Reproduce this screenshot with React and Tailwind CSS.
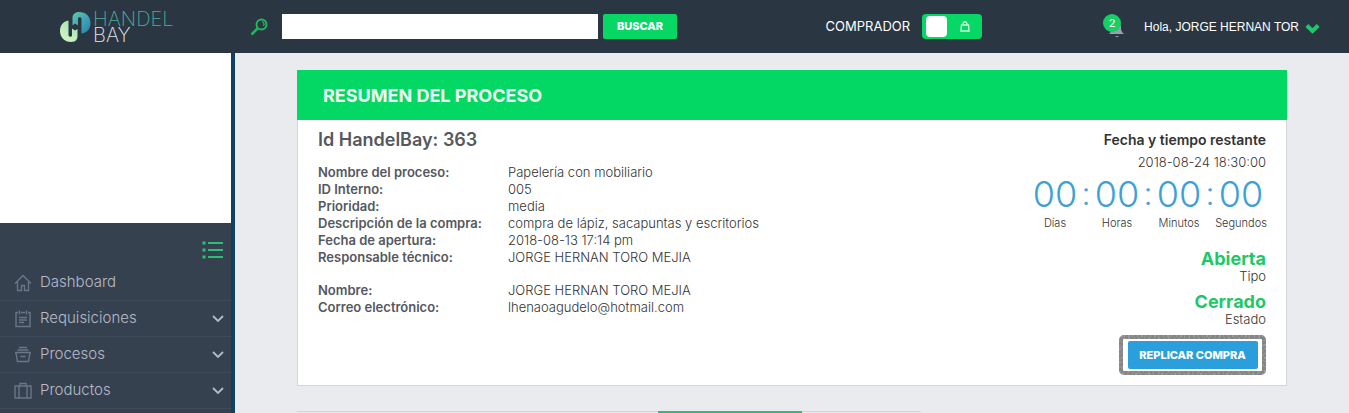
const details = [
    ["Nombre del proceso:", "Papelería con mobiliario"],
    ["ID Interno:", "005"],
    ["Prioridad:", "media"],
    ["Descripción de la compra:", "compra de lápiz, sacapuntas y escritorios"],
    ["Fecha de apertura:", "2018-08-13 17:14 pm"],
    ["Responsable técnico:", "JORGE HERNAN TORO MEJIA"],
];

const contact = [
    ["Nombre:", "JORGE HERNAN TORO MEJIA"],
    ["Correo electrónico:", "lhenaoagudelo@hotmail.com"],
];

const countdown = ["Días", "Horas", "Minutos", "Segundos"];

const menu = [
    { label: "Dashboard", icon: HomeIcon },
    { label: "Requisiciones", icon: NotesIcon, nested: true },
    { label: "Procesos", icon: BasketIcon, nested: true },
    { label: "Productos", icon: CaseIcon, nested: true },
];

function HomeIcon() {
    return (
        <svg viewBox="0 0 18 18" className="size-[18px]" fill="none" stroke="currentColor" strokeWidth="1.4">
            <path d="M1 9.5 9 1.5l8 8M3.500 8v8.500h4v-5h3v5h4V8" />
        </svg>
    );
}

function NotesIcon() {
    return (
        <svg viewBox="0 0 18 18" className="size-[18px]" fill="none" stroke="currentColor" strokeWidth="1.4">
            <path d="M4 2.500H2v14h14v-14h-2M7 2.500h4M5.500 0.500v4M12.500 0.500v4M5 7.500h8M5 10h8M5 12.500h5" />
        </svg>
    );
}

function BasketIcon() {
    return (
        <svg viewBox="0 0 18 18" className="size-[18px]" fill="none" stroke="currentColor" strokeWidth="1.4">
            <path d="M5 1.500h8M3.500 4h11M1 6.500h16M2 7l1.500 8.500h11L16 7M6.500 10.500h5" />
        </svg>
    );
}

function CaseIcon() {
    return (
        <svg viewBox="0 0 18 18" className="size-[18px]" fill="none" stroke="currentColor" strokeWidth="1.4">
            <path d="M1 4h16v12H1zM6 4V1.500h6V4M5 4v12M13 4v12" />
        </svg>
    );
}

function Chevron() {
    return (
        <svg viewBox="0 0 12 8" className="h-2 w-3" fill="none" stroke="currentColor" strokeWidth="1.8">
            <path d="M1 1l5 5 5-5" />
        </svg>
    );
}

function Logo() {
    return (
        <a href="#" aria-label="Handel Bay" className="flex items-center gap-0.5">
            <svg viewBox="0 0 32 32" className="size-8">
                <defs>
                    <linearGradient id="markLeft" x1="0" y1="1" x2="0.6" y2="0">
                        <stop offset="0" stopColor="#dcf7c8" />
                        <stop offset="1" stopColor="#a4e2b4" />
                    </linearGradient>
                    <linearGradient id="markRight" x1="0" y1="0" x2="1" y2="1">
                        <stop offset="0" stopColor="#62c6b2" />
                        <stop offset="1" stopColor="#2183b0" />
                    </linearGradient>
                </defs>
                <path
                    d="M9.500 9.500C4 10.500 1 14.500 1 20C1 26.500 6 31 12 31C17 31 18.500 28 18.500 25V18L16 19.500L13 17.500V25C12.500 26 10 26 9.500 24.500Z"
                    fill="url(#markLeft)"
                />
                <path
                    d="M13.500 14.500V7C13.500 3.500 16 1 20 1C27 1 31.500 5.500 31.500 12C31.500 17.500 28.500 21.500 22.500 22.500V7.500C22 6 19.500 6 19 7V14.500L16 12.500Z"
                    fill="url(#markRight)"
                />
            </svg>
            <span className="flex flex-col text-[20px] leading-4 font-extralight">
                <span className="text-[#4cac9c]">HANDEL</span>
                <span className="text-[#e8e8ee]">BAY</span>
            </span>
        </a>
    );
}

function Header() {
    return (
        <header className="flex h-[53px] items-center bg-[#2b3643] pr-[29px] text-white">
            <div className="w-[250px] shrink-0 pl-[59px]">
                <Logo />
            </div>

            <form className="flex items-center">
                <svg viewBox="0 0 18 18" className="mr-3.5 size-[18px]" fill="none" stroke="#1fb85c">
                    <circle cx="11.500" cy="6.500" r="5" strokeWidth="2" />
                    <path d="M12 3.500a3 3 0 0 1 1.500 4.500" strokeWidth="1.300" />
                    <path d="M8 10 1.500 16.500" strokeWidth="2.500" />
                </svg>
                <input type="text" aria-label="Buscar" className="h-[25px] w-[316px] bg-white px-2 text-sm text-gray-700" />
                <button type="button" className="ml-[5px] h-[25px] w-[74px] rounded-xs bg-[#06d765] text-[11px] font-extrabold">
                    BUSCAR
                </button>
            </form>

            <label className="ml-auto flex items-center gap-3 text-[13px]">
                COMPRADOR
                <input type="checkbox" className="sr-only" />
                <span className="flex h-[25px] w-[60px] items-center justify-between rounded-sm bg-[#06d765] pr-3 pl-1">
                    <span className="h-[21px] w-[21px] rounded-sm bg-white" />
                    <svg viewBox="0 0 10 11" className="h-[11px] w-2.5" fill="none" stroke="#c9fbd9" strokeWidth="1.400">
                        <path d="M1.500 4h7l.5 6H1zM3.200 4V2.500a1.800 1.800 0 0 1 3.600 0V4" />
                    </svg>
                </span>
            </label>

            <button type="button" aria-label="2 notificaciones" className="relative ml-[121px] h-[25px] w-[22px]">
                <svg viewBox="0 0 22 25" className="h-[25px] w-[22px]" fill="#98a1a8">
                    <path d="M6 20c2-2 2-3 2-7 0-3 2-5 5-5s5 2 5 5c0 4 1 5 3 7z" />
                    <path d="M12 22h4c-1 1.500-3 1.500-4 0z" />
                </svg>
                <span className="absolute top-0 left-0 flex size-[18px] items-center justify-center rounded-full bg-[#16cf66] text-[11px]">
                    2
                </span>
            </button>

            <button
                type="button"
                className="ml-[19px] flex items-center gap-1.5 font-['Liberation_Sans',sans-serif] text-[12px] whitespace-nowrap"
            >
                Hola, JORGE HERNAN TOR
                <svg viewBox="0 0 15 11" className="mt-1 h-[11px] w-[15px]" fill="none" stroke="#1fc76a" strokeWidth="4">
                    <path d="M1.800 2.500 7.500 8l5.700-5.500" />
                </svg>
            </button>
        </header>
    );
}

function Sidebar() {
    return (
        <aside className="w-[235px] shrink-0 border-r-4 border-[#0f4261] bg-[#364150]">
            <div className="h-[170px] bg-white" />
            <div className="flex h-[42px] items-end justify-end pr-2 pb-1.5">
                <button type="button" aria-label="Contraer menú">
                    <svg viewBox="0 0 21 18" className="h-[18px] w-[21px]" stroke="#2dbf77" strokeWidth="2">
                        <path d="M6 2h15M6 9h15M6 16h15" />
                        <path d="M0.500 2h3M0.500 9h3M0.500 16h3" strokeWidth="3" />
                    </svg>
                </button>
            </div>
            <nav>
                {menu.map(({ label, icon: Icon, nested }) => (
                    <a
                        key={label}
                        href="#"
                        className="flex h-9 items-center gap-2 border-b border-[#3f4b5b] pr-[7px] pl-3.5 text-[15px] font-light text-[#b4bcc8]"
                    >
                        <span className="text-[#6a7685]">
                            <Icon />
                        </span>
                        <span className="flex-1">{label}</span>
                        {nested && <Chevron />}
                    </a>
                ))}
            </nav>
        </aside>
    );
}

function DetailList({ rows }) {
    return (
        <dl className="grid grid-cols-[190px_1fr] text-[13px] leading-[17px]">
            {rows.map(([term, value]) => (
                <div key={term} className="contents">
                    <dt className="font-semibold text-[#55585e]">{term}</dt>
                    <dd className="font-light text-[#333]">{value}</dd>
                </div>
            ))}
        </dl>
    );
}

function Countdown() {
    return (
        <div className="flex justify-end">
            {countdown.map((unit, i) => (
                <div key={unit} className="flex">
                    {i > 0 && <span className="w-3 text-center text-[32px] leading-[44px] font-light text-[#4ba3d3]">:</span>}
                    <div className="flex w-[50px] flex-col items-center">
                        <span className="text-[36px] leading-[44px] font-light text-[#3fa0d8]">00</span>
                        <span className="text-[11px] leading-[14px] font-light text-[#333]">{unit}</span>
                    </div>
                </div>
            ))}
        </div>
    );
}

function Summary() {
    return (
        <section>
            <h1 className="flex h-[50px] items-center bg-[#02d863] px-[26px] text-[18px] font-bold text-[#eefff4]">
                RESUMEN DEL PROCESO
            </h1>
            <div className="flex justify-between border border-t-0 border-[#d3d6da] bg-white px-5 pt-2 pb-2.5">
                <div>
                    <h2 className="mb-3 text-[18px] leading-6 font-semibold text-[#55585e]">Id HandelBay: 363</h2>
                    <DetailList rows={details} />
                    <div className="mt-4">
                        <DetailList rows={contact} />
                    </div>
                </div>

                <div className="flex flex-col items-end text-[13px]">
                    <h3 className="text-[14px] leading-6 font-semibold text-[#333]">Fecha y tiempo restante</h3>
                    <p className="leading-5 font-light text-[#333]">2018-08-24 18:30:00</p>
                    <Countdown />
                    <p className="mt-5 text-[18px] leading-[18px] font-bold text-[#1fc867]">Abierta</p>
                    <p className="leading-[17px] font-light text-[#333]">Tipo</p>
                    <p className="mt-2 text-[18px] leading-[18px] font-bold text-[#1fc867]">Cerrado</p>
                    <p className="leading-[17px] font-light text-[#333]">Estado</p>

                    {/* Hand-drawn frame around the action */}
                    <div className="relative mt-[7px] flex h-10 w-[147px] items-center justify-center">
                        <svg viewBox="0 0 147 40" className="absolute inset-0 h-full w-full" fill="none">
                            <rect x="2" y="2" width="143" height="36" rx="3" stroke="#858585" strokeWidth="4" />
                            <rect x="1" y="1" width="145" height="38" rx="4" stroke="#b4b4b4" strokeDasharray="1 3 2 2 1 4" />
                            <rect x="3" y="3" width="141" height="34" rx="2" stroke="#a8a8a8" strokeDasharray="1 3 2 4" />
                        </svg>
                        <button
                            type="button"
                            className="relative h-7 w-[130px] rounded-xs bg-[#2a9fdc] text-[11px] font-extrabold text-white"
                        >
                            REPLICAR COMPRA
                        </button>
                    </div>
                </div>
            </div>
        </section>
    );
}

export default function App() {
    return (
        <div className="flex min-h-screen flex-col font-['Inter',sans-serif]">
            <Header />
            <div className="flex flex-1">
                <Sidebar />
                <main className="flex-1 bg-[#e9ebee] px-[62px] pt-[17px]">
                    <Summary />
                    <div className="mt-[25px] flex h-0.5 w-[624px]">
                        <span className="w-[361px] border-t border-[#d0d5d9]" />
                        <span className="w-36 bg-[#2abf75]" />
                        <span className="flex-1 border-t border-[#d0d5d9]" />
                    </div>
                </main>
            </div>
        </div>
    );
}
